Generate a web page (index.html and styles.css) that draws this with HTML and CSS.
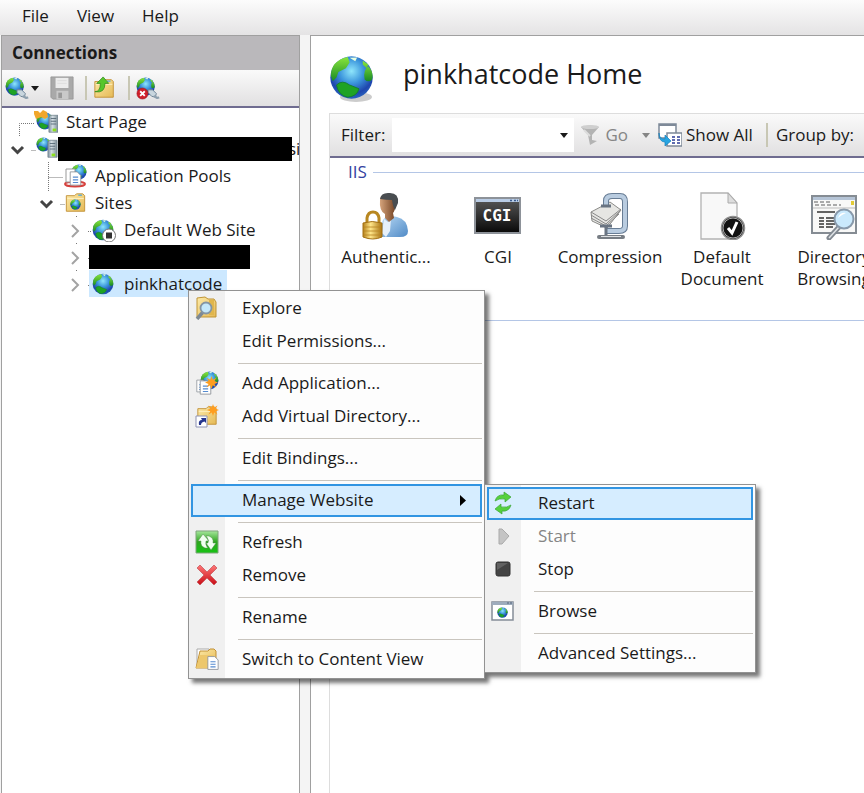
FILE: index.html
```html
<!DOCTYPE html>
<html lang="en">
<head>
<meta charset="utf-8">
<meta name="viewport" content="width=device-width, initial-scale=1">
<title>pinkhatcode Home</title>
<link rel="stylesheet" href="styles.css">
</head>
<body>
<svg class="defs" width="0" height="0" aria-hidden="true">
  <defs>
    <radialGradient id="sea" cx=".5" cy=".35" r=".7"><stop offset="0" stop-color="#8fe6fb"/><stop offset=".4" stop-color="#3d97dd"/><stop offset=".75" stop-color="#1f46ae"/><stop offset="1" stop-color="#2e6fc4"/></radialGradient>
    <linearGradient id="land" x1="0" y1="0" x2="0" y2="1"><stop offset="0" stop-color="#8ae63c"/><stop offset="1" stop-color="#188a25"/></linearGradient>
    <linearGradient id="folderFill" x1="0" y1="0" x2="1" y2="1"><stop offset="0" stop-color="#fdeaa8"/><stop offset="1" stop-color="#e5b955"/></linearGradient>
    <linearGradient id="metal" x1="0" y1="0" x2="1" y2="0"><stop offset="0" stop-color="#7f92a1"/><stop offset=".4" stop-color="#d3dde2"/><stop offset="1" stop-color="#7d8e98"/></linearGradient>
    <linearGradient id="green" x1="0" y1="0" x2="0" y2="1"><stop offset="0" stop-color="#a6e79c"/><stop offset=".5" stop-color="#2ea51f"/><stop offset="1" stop-color="#16c313"/></linearGradient>
    <linearGradient id="redFill" x1="0" y1="0" x2="0" y2="1"><stop offset="0" stop-color="#f77"/><stop offset="1" stop-color="#c80d16"/></linearGradient>
    <linearGradient id="dark" x1="0" y1="0" x2="0" y2="1"><stop offset="0" stop-color="#5a5a5a"/><stop offset="1" stop-color="#080808"/></linearGradient>
    <linearGradient id="gold" x1="0" y1="0" x2="1" y2="0"><stop offset="0" stop-color="#b5811a"/><stop offset=".4" stop-color="#ffe68a"/><stop offset="1" stop-color="#a87312"/></linearGradient>
    <linearGradient id="shirt" x1="0" y1="0" x2="1" y2="1"><stop offset="0" stop-color="#b7d8f4"/><stop offset="1" stop-color="#4f8ac6"/></linearGradient>
    <linearGradient id="skin" x1="0" y1="0" x2="1" y2="0"><stop offset="0" stop-color="#d6a47c"/><stop offset="1" stop-color="#6f3f20"/></linearGradient>
    <symbol id="globe" viewBox="0 0 24 24">
      <circle cx="12" cy="12" r="11.3" fill="url(#sea)"/>
      <path d="M1 11Q1 3 10 1l1 3-2 3-4 2-1 3-2 2Z" fill="url(#land)"/>
      <path d="M4 16q3-3 7 0l5 2q-1 4-6 4.500-5-1-6-6.500Z" fill="#1fa324" stroke="#147f2c" stroke-width=".5"/>
      <path d="M21 6q-3 2-2 7 2 2 4 0 1-4-2-7ZM18 3l3 2-1 2-2-2Z" fill="url(#land)"/>
      <path d="M11 1.500l4-.2-1 2Z" fill="#e9ffe0"/>
    </symbol>
    <symbol id="server" viewBox="0 0 12 20">
      <path d="M1 2l2-1.500h8V19H1Z" fill="url(#metal)" stroke="#6f7f8b" stroke-width=".8"/>
      <path d="M3 4h6M3 7h6M3 10h6" stroke="#596b78" stroke-width="1"/>
      <path d="M5 15h4v3H5Z" fill="#8be01c"/>
    </symbol>
    <symbol id="folder" viewBox="0 0 24 24">
      <path d="M2 4h9l2-2h7l2 2v17H2Z" fill="url(#folderFill)" stroke="#c29136" stroke-width="1"/>
      <path d="M3 7h18" stroke="#fff2c4"/>
      <path d="M15 3.500h4" stroke="#5badd8" stroke-width="1.500"/>
    </symbol>
    <symbol id="plug" viewBox="0 0 26 26">
      <use href="#globe" x="0" y="1" width="21" height="21"/>
      <path d="M13 15l5 0 4 4-1 4-4-1-4-4Z" fill="#c9d6de" stroke="#687f91"/>
      <path d="M20 21q2 4 5 2" fill="none" stroke="#8ea0ae" stroke-width="2.500"/>
    </symbol>
    <symbol id="star" viewBox="0 0 12 12"><path d="M6 0l1.200 3.400L10.500 1.500 8.700 4.700 12 6 8.700 7.300l1.800 3.200-3.300-1.900L6 12 4.800 8.600 1.500 10.500 3.300 7.300 0 6l3.300-1.300L1.500 1.500l3.300 1.900Z" fill="#ff9d1e"/></symbol>
    <symbol id="doc" viewBox="0 0 14 17"><path d="M1 1h8l4 4v11H1Z" fill="#fff" stroke="#8d9299"/><path d="M4 7h6M4 10h6M4 13h6" stroke="#568bd0" stroke-width="1.300"/></symbol>
  </defs>
</svg>

<nav class="menubar" aria-label="Main menu">
  <button type="button">File</button>
  <button type="button">View</button>
  <button type="button">Help</button>
</nav>

<div class="workspace">
  <aside class="connections">
    <h2>Connections</h2>
    <div class="toolbar">
      <button type="button" class="split" aria-label="Connect">
        <svg class="icon" viewBox="0 0 26 26"><use href="#plug" width="26" height="26"/></svg>
        <svg class="caret" viewBox="0 0 8 5"><path d="M0 0h8L4 5Z"/></svg>
      </button>
      <button type="button" aria-label="Save" disabled>
        <svg class="icon" viewBox="0 0 26 26"><path d="M1 1h24v24H3l-2-2Z" fill="#a9a9a9" stroke="#999"/><path d="M6 2h14v11H6Z" fill="#ececec"/><path d="M7 16h13v9H7Z" fill="#c9c9c9"/><path d="M9 18h4v6H9Z" fill="#999"/><path d="M8 5h10M8 8h10" stroke="#dcdcdc"/></svg>
      </button>
      <span class="divider"></span>
      <button type="button" aria-label="Up">
        <svg class="icon" viewBox="0 0 26 26"><use href="#folder" x="0" y="2" width="24" height="24"/><path d="M2 17q6 0 6-9H4l7-7 6 7h-4q0 11-11 9Z" fill="#55c62c" stroke="#318a1b" stroke-width=".8"/></svg>
      </button>
      <span class="divider"></span>
      <button type="button" aria-label="Delete connection">
        <svg class="icon" viewBox="0 0 26 26"><use href="#plug" width="26" height="26"/><circle cx="7" cy="19" r="6" fill="#cf1f2a" stroke="#9c1620" stroke-width=".6"/><path d="M4.500 16.500l5 5m0-5l-5 5" stroke="#fff" stroke-width="2"/></svg>
      </button>
    </div>

    <ul class="tree">
      <li>
        <div class="row">
          <svg class="joint" viewBox="0 0 29 27"><path class="dots" d="M17.500 28V15.500H32"/></svg>
          <span class="node"><svg class="icon" viewBox="0 0 24 24"><use href="#globe" x="2" y="2" width="18" height="18"/><path d="M0 1h4l2 2 3-3 4 2 1 5-3 2-4-2-5 2-2-5Z" fill="#f1a72c"/><use href="#server" x="14" y="4" width="11" height="20"/></svg>Start Page</span>
        </div>
      </li>
      <li>
        <div class="row">
          <svg class="joint" viewBox="0 0 29 27"><path class="open" d="M10 12l5.500 5.500L21 12"/><path class="dots" d="M29.500 15.500H34"/></svg>
          <span class="node machine"><svg class="icon" viewBox="0 0 24 24"><use href="#globe" x="2" y="0" width="15" height="15"/><use href="#server" x="13" y="1" width="11" height="22"/></svg><span class="redacted wide"></span><span class="tail">si</span></span>
        </div>
        <ul>
          <li>
            <div class="row">
              <svg class="joint" viewBox="0 0 29 27"><path class="dots" d="M17.500 0V29M17.500 15.500H32"/></svg>
              <span class="node"><svg class="icon" viewBox="0 0 24 24"><use href="#globe" x="8" y="0" width="16" height="16"/><ellipse cx="12" cy="20" rx="10" ry="2.500" fill="#fff" stroke="#d5413d" stroke-width="2"/><path d="M3 5h9v13H3Z" fill="#fff" stroke="#999"/><use href="#doc" x="6" y="7" width="13" height="15"/></svg>Application Pools</span>
            </div>
          </li>
          <li>
            <div class="row">
              <svg class="joint" viewBox="0 0 29 27"><path class="open" d="M10 12l5.500 5.500L21 12"/><path class="dots" d="M29.500 15.500H34"/></svg>
              <span class="node"><svg class="icon" viewBox="0 0 24 24"><use href="#folder" x="1" y="1" width="23" height="22"/><use href="#globe" x="7" y="8" width="11" height="11"/></svg>Sites</span>
            </div>
            <ul>
              <li>
                <div class="row">
                  <svg class="joint" viewBox="0 0 29 27"><path class="shut" d="M12 9l6 6-6 6"/><path class="dots" d="M16.500 0v2M28 15.500h4"/></svg>
                  <span class="node"><svg class="icon" viewBox="0 0 24 24"><use href="#globe" x="0" y="1" width="22" height="22"/><circle cx="17" cy="17.500" r="6.500" fill="#fff" stroke="#777"/><path d="M14 14.500h6v6h-6Z" fill="#333"/></svg>Default Web Site</span>
                </div>
              </li>
              <li>
                <div class="row">
                  <svg class="joint" viewBox="0 0 29 27"><path class="shut" d="M12 9l6 6-6 6"/><path class="dots" d="M16.500 0v2M28 15.500h4"/></svg>
                  <span class="redacted"></span>
                </div>
              </li>
              <li>
                <div class="row">
                  <svg class="joint" viewBox="0 0 29 27"><path class="shut" d="M12 9l6 6-6 6"/><path class="dots" d="M16.500 0v2M28 15.500h4"/></svg>
                  <span class="node selected"><svg class="icon" viewBox="0 0 24 24"><use href="#globe" x="0" y="1" width="22" height="22"/></svg>pinkhatcode</span>
                </div>
              </li>
            </ul>
          </li>
        </ul>
      </li>
    </ul>
  </aside>

  <main class="page">
    <header class="page-head">
      <svg class="big-globe" viewBox="0 0 46 48"><ellipse cx="27" cy="42" rx="16" ry="5" fill="#999" opacity=".5"/><use href="#globe" width="45" height="45"/></svg>
      <h1>pinkhatcode Home</h1>
    </header>

    <section class="list">
      <div class="filterbar">
        <label for="filter">Filter:</label>
        <span class="combo"><input id="filter" type="text"><button type="button" aria-label="Recent filters"><svg class="caret" viewBox="0 0 8 5"><path d="M0 0h8L4 5Z"/></svg></button></span>
        <button type="button" class="go" disabled>
          <svg class="icon" viewBox="0 0 24 24"><path d="M2 4q9-3 18 0l-7 8v5l5 1-7 4-2-10Z" fill="#b3b3b3"/><ellipse cx="11" cy="4" rx="9" ry="2" fill="#cfcfcf"/><path d="M5 7l6 6" stroke="#ddd" stroke-width="2"/></svg>Go
          <svg class="caret" viewBox="0 0 8 5"><path d="M0 0h8L4 5Z"/></svg>
        </button>
        <button type="button" class="show-all">
          <svg class="icon" viewBox="0 0 24 24"><path d="M1 1h17v14H1Z" fill="#fff" stroke="#7e8998" stroke-width="1.500"/><path d="M1 2h17" stroke="#7e8998" stroke-width="2"/><path d="M9 10h15v13H9Z" fill="#fff" stroke="#7e8998" stroke-width="1.500"/><path d="M14 14h3m2 0h3m-8 3h3m2 0h3m-8 3h3m2 0h3" stroke="#606cb0" stroke-width="2"/><path d="M1 10q0 6 6 6v-4l6 6-6 5v-4q-6 0-6-9Z" fill="#28a5e2" stroke="#1680bb" stroke-width=".7"/></svg>Show All
        </button>
        <span class="divider"></span>
        <span>Group by:</span>
      </div>

      <h2 class="group"><span>IIS</span></h2>
      <ul class="features">
        <li>
          <svg viewBox="0 0 48 48"><path d="M20 45V31q1-7 10-7l5 1q10 2 11 14 0 6-8 6Z" fill="url(#shirt)"/><path d="M22 27l4 3 3-3-1 12-4 6-4-4Z" fill="#e6f0fa"/><path d="M18 8q0-6 8-6 9 0 8 9-1 8-3 10l1 5-5 4-4-4v-4q-6-3-5-14Z" fill="url(#skin)"/><path d="M18 7q1-7 10-6 9 0 8 10l-3 7q-2-3-3-10-6 0-12-1Z" fill="#494d50"/><path d="M5 32v-6q1-6 6-6t6 6v6" fill="none" stroke="#b88720" stroke-width="3"/><path d="M1 31q9-3 19 0v14q-9 4-19 0Z" fill="url(#gold)" stroke="#a47115"/><path d="M2 35h17M2 39h17M2 43h17" stroke="#b88422" stroke-width=".8"/></svg>
          Authentic...
        </li>
        <li>
          <svg viewBox="0 0 48 48"><path d="M1 6h45v35H1Z" fill="url(#dark)" stroke="#8d9299" stroke-width="2"/><path d="M2 7h43v3H2Z" fill="#b9cce5"/><path d="M36 8.500h2m2 0h2m1 0h1" stroke="#3a5a8c" stroke-width="1.500"/><text x="23" y="29" class="cgi">CGI</text></svg>
          CGI
        </li>
        <li>
          <svg viewBox="0 0 48 48"><path d="M5 20l19-10 11 8-14 18L6 29Z" fill="#e6e6e3" stroke="#8b8b88"/><path d="M5 20l15 9 15-12M5 23l15 9 14-13M5 26l15 8 13-12" fill="none" stroke="#888"/><path d="M20 14V9q0-5 6-5h8q5 0 5 6v24q0 5-6 5H20" fill="none" stroke="#687d95" stroke-width="6"/><path d="M20 14V9q0-5 6-5h8q5 0 5 6v24q0 5-6 5H20" fill="none" stroke="#b9cce0" stroke-width="4"/><path d="M15 14h10M20 33v12M14 34h12" stroke="#697482" stroke-width="3"/><path d="M13 45h24" stroke="#777d84" stroke-width="4" stroke-linecap="round"/><path d="M15 44.500h20" stroke="#dcdfe2"/></svg>
          Compression
        </li>
        <li>
          <svg viewBox="0 0 48 48"><path d="M3 1h27l9 10v36H3Z" fill="#f8f8f8" stroke="#b2b2b2" stroke-width="1.300"/><path d="M30 1v10h9Z" fill="#ddd" stroke="#aaa"/><circle cx="35" cy="36" r="11.500" fill="#111" stroke="#909090" stroke-width="1.500"/><circle cx="35" cy="36" r="10" fill="none" stroke="#eee" stroke-width=".7"/><path d="M30 36l4 5 5-11" fill="none" stroke="#fff" stroke-width="3"/></svg>
          Default<br>Document
        </li>
        <li>
          <svg viewBox="0 0 48 48"><path d="M2 4h44v37H2Z" fill="#f8f8f7" stroke="#858c93" stroke-width="2"/><path d="M3 5h42v3H3Z" fill="#b5c4d6"/><path d="M4 10h17M5 13h26" stroke="#aaa" stroke-width="2" stroke-dasharray="4 2"/><path d="M41 9h3v4h-3Z" fill="#e2cb37"/><path d="M3 16h42" stroke="#bbb"/><path d="M7 20h18M9 26h5m2 0h9M9 29h5m2 0h9M9 32h5m2 0h9M9 35h5m2 0h7" stroke="#333" stroke-width="1.500"/><path d="M29 35L19 46" stroke="#828991" stroke-width="5" stroke-linecap="round"/><path d="M29 35L19 46" stroke="#dfe3e6" stroke-width="1.500"/><circle cx="34" cy="27" r="9.500" fill="#cae9fc" stroke="#8899aa" stroke-width="2"/><path d="M28 26q2-6 8-5-5 2-8 5Z" fill="#fff"/></svg>
          Directory<br>Browsing
        </li>
      </ul>
    </section>
  </main>
</div>

<ul class="menu context">
  <li><button type="button"><svg class="icon" viewBox="0 0 24 24"><path d="M2 2l8-1 3 2h6l2 3v15H2Z" fill="url(#folderFill)" stroke="#bf9537"/><path d="M14 4h5v15h-5Z" fill="#e0b64d"/><path d="M8 16l-6 7" stroke="#7e8993" stroke-width="3.500"/><circle cx="11" cy="12" r="5.500" fill="#c4e8fa" stroke="#8495a3" stroke-width="1.800"/></svg>Explore</button></li>
  <li><button type="button"><span class="icon"></span>Edit Permissions...</button></li>
  <li class="sep" role="separator"></li>
  <li><button type="button"><svg class="icon" viewBox="0 0 24 24"><use href="#globe" x="5" y="0" width="19" height="19"/><use href="#doc" x="1" y="8" width="11" height="14"/><use href="#doc" x="4" y="9" width="13" height="15"/><use href="#star" x="10" y="5" width="13" height="13"/></svg>Add Application...</button></li>
  <li><button type="button"><svg class="icon" viewBox="0 0 24 24"><use href="#folder" x="1" y="1" width="22" height="22"/><path d="M1 12h11v11H1Z" fill="#fff" stroke="#8e93b5"/><path d="M4 21q-1-5 3-5l-1-2h5v5l-1.500-1.500Q6 18 6 21Z" fill="#26368f"/><use href="#star" x="12" y="0" width="12" height="12"/></svg>Add Virtual Directory...</button></li>
  <li class="sep" role="separator"></li>
  <li><button type="button"><span class="icon"></span>Edit Bindings...</button></li>
  <li class="sep" role="separator"></li>
  <li class="parent">
    <button type="button" class="active" aria-haspopup="true" aria-expanded="true"><span class="icon"></span>Manage Website<svg class="arrow" viewBox="0 0 6 11"><path d="M0 0l6 5.500L0 11Z"/></svg></button>
    <ul class="menu submenu">
      <li><button type="button" class="active"><svg class="icon" viewBox="0 0 24 24"><path d="M4 10Q6 3 13 4V1l7 5-6 5V8q-6-1-10 2ZM20 14q-2 7-9 6v3l-7-5 6-5v3q6 1 10-2Z" fill="#55d13d" stroke="#3ba333" stroke-width=".7"/></svg>Restart</button></li>
      <li><button type="button" disabled><svg class="icon" viewBox="0 0 24 24"><path d="M8 5h3l7 7-7 8H8Z" fill="#c4c4c4" stroke="#aaa"/></svg>Start</button></li>
      <li><button type="button"><svg class="icon" viewBox="0 0 24 24"><rect x="5" y="5" width="14" height="14" rx="2" fill="#444" stroke="#333"/><path d="M6 13V6h11Z" fill="#626262"/></svg>Stop</button></li>
      <li class="sep" role="separator"></li>
      <li><button type="button"><svg class="icon" viewBox="0 0 24 24"><path d="M1 3h21v18H1Z" fill="#fff" stroke="#858d98" stroke-width="1.500"/><path d="M1 4.500h21" stroke="#9eacbc" stroke-width="3"/><path d="M16 4h2m1 0h2" stroke="#526178"/><use href="#globe" x="6" y="8" width="11" height="11"/></svg>Browse</button></li>
      <li class="sep" role="separator"></li>
      <li><button type="button"><span class="icon"></span>Advanced Settings...</button></li>
    </ul>
  </li>
  <li class="sep" role="separator"></li>
  <li><button type="button"><svg class="icon" viewBox="0 0 24 24"><path d="M1 1h22v22H1Z" fill="url(#green)" stroke="#7fa47b"/><path d="M8 4L3 11h3q-1 5 4 7h3q-3-3-2-7h3ZM16 20l5-7h-3q1-5-4-7h-3q3 3 2 7h-2Z" fill="#f1fff0" stroke="#538d4d" stroke-width=".5"/></svg>Refresh</button></li>
  <li><button type="button"><svg class="icon" viewBox="0 0 24 24"><path d="M2 5l3-3 7 7 7-7 3 3-7 7 7 7-3 3-7-7-7 7-3-3 7-7Z" fill="url(#redFill)" stroke="#c85960" stroke-width=".8"/></svg>Remove</button></li>
  <li class="sep" role="separator"></li>
  <li><button type="button"><span class="icon"></span>Rename</button></li>
  <li class="sep" role="separator"></li>
  <li><button type="button"><svg class="icon" viewBox="0 0 24 24"><path d="M2 2h12v16H2Z" fill="#fff" stroke="#aaa"/><path d="M5 4h8l2-2h4l2 2v17H1Z" fill="url(#folderFill)" stroke="#c29136"/><path d="M1 21L5 8h14l-4 13Z" fill="#edc76c"/><use href="#doc" x="12" y="8" width="12" height="16"/></svg>Switch to Content View</button></li>
</ul>
</body>
</html>
```
FILE: styles.css
```css
* {
  box-sizing: border-box;
}

body {
  margin: 0;
  min-height: 100vh;
  display: flex;
  flex-direction: column;
  overflow: hidden;
  background: #f4f4f4;
  color: #1a1a1a;
  font: 17px/22px "Open Sans", "Noto Sans", sans-serif;
}

button,
input {
  font: inherit;
  color: inherit;
}

button {
  display: flex;
  align-items: center;
  padding: 0;
  border: 0;
  background: none;
  white-space: nowrap;
}

button:disabled {
  color: #858585;
}

ul {
  margin: 0;
  padding: 0;
  list-style: none;
}

h1,
h2 {
  margin: 0;
}

.defs {
  position: absolute;
}

.icon {
  flex: none;
  width: 24px;
  height: 24px;
}

.caret {
  flex: none;
  width: 8px;
  height: 5px;
  fill: currentColor;
}

.divider {
  width: 2px;
  height: 24px;
  background: #c8c7b4;
}

.menubar {
  display: flex;
  gap: 28px;
  height: 35px;
  padding: 0 22px 4px;
  background: linear-gradient(#fcfcfc, #e4e3e4);
}

.workspace {
  flex: 1;
  display: flex;
  gap: 10px;
  padding-left: 1px;
}

/* Connections pane */
.connections {
  flex: 0 0 299px;
  overflow: hidden;
  border: solid #a0a0a0;
  border-width: 1px 1px 0;
  background: #fff;
}

.connections h2 {
  padding: 6px 10px;
  background: #bab8bb;
  font-size: 17px;
  line-height: 22px;
}

.toolbar {
  display: flex;
  align-items: center;
  gap: 6px;
  height: 38px;
  padding: 0 3px;
  border-bottom: 2px solid #6f6c90;
  background: linear-gradient(#fafafa, #e1e0e1);
}

.toolbar .divider {
  margin-left: 5px;
}

.split {
  gap: 2px;
  margin-right: 5px;
}

.tree ul {
  padding-left: 29px;
}

.row {
  display: flex;
  align-items: center;
  height: 27px;
}

.joint {
  flex: none;
  width: 29px;
  height: 27px;
  overflow: visible;
  fill: none;
}

.dots {
  stroke: #777;
  stroke-dasharray: 1 1;
}

.open {
  stroke: #444;
  stroke-width: 3;
}

.shut {
  stroke: #a3a3a3;
  stroke-width: 2;
}

.node {
  display: flex;
  align-items: center;
  gap: 8px;
  height: 27px;
  padding: 0 5px 0 3px;
  white-space: nowrap;
}

.selected {
  background: #cce8ff;
}

.machine {
  gap: 0;
}

.redacted {
  flex: none;
  width: 161px;
  height: 24px;
  background: #000;
}

.wide {
  width: 234px;
  z-index: 1;
}

.tail {
  margin-left: -4px;
}

/* Feature page */
.page {
  flex: 1;
  min-width: 0;
  display: flex;
  flex-direction: column;
  overflow: hidden;
  padding-left: 18px;
  border-top: 1px solid #a0a0a0;
  border-left: 1px solid #a0a0a0;
  background: #fff;
}

.page-head {
  display: flex;
  gap: 28px;
  padding: 19px 0 10px;
}

.page-head h1 {
  padding-top: 3px;
  font-size: 27px;
  line-height: 32px;
  font-weight: 400;
  white-space: nowrap;
}

.big-globe {
  width: 46px;
  height: 48px;
}

.list {
  flex: 1;
  border-top: 1px solid #ddd;
  border-left: 1px solid #ddd;
}

.filterbar {
  display: flex;
  align-items: center;
  height: 44px;
  padding-left: 11px;
  border-bottom: 2px solid #6f6c90;
  background: linear-gradient(#fafafa, #e1e0e1);
  white-space: nowrap;
}

.combo {
  display: flex;
  width: 182px;
  height: 34px;
  margin: 0 5px 0 7px;
  background: #fff;
}

.combo input {
  flex: 1;
  min-width: 0;
  border: 0;
  background: none;
}

.combo button {
  justify-content: center;
  width: 20px;
}

.go .icon {
  margin-right: 2px;
}

.go .caret {
  margin: 0 8px 0 14px;
}

.show-all .icon {
  margin-right: 4px;
}

.filterbar .divider {
  margin: 0 8px 0 13px;
}

.group {
  display: flex;
  align-items: center;
  gap: 6px;
  padding: 3px 0 0 18px;
  color: #3442a0;
  font-size: 17px;
  line-height: 22px;
  font-weight: 400;
}

.group::after {
  content: "";
  flex: 1;
  height: 1px;
  background: #b4c6e6;
}

.features {
  display: flex;
  height: 138px;
  padding-top: 9px;
  border-bottom: 1px solid #b4c6e6;
}

.features li {
  flex: 0 0 112px;
  text-align: center;
  white-space: nowrap;
}

.features svg {
  display: block;
  width: 48px;
  height: 48px;
  margin: 0 auto 6px;
}

.cgi {
  fill: #fff;
  font: bold 16px "DejaVu Sans Mono", monospace;
  text-anchor: middle;
}

/* Popup menus */
.menu {
  position: absolute;
  padding: 1px 2px 2px;
  border: 1px solid #929292;
  background: linear-gradient(90deg, #f0f0f0 36px, #fdfdfd 36px);
  box-shadow: 4px 4px 4px #0008;
}

.context {
  top: 290px;
  left: 188px;
  width: 297px;
}

.submenu {
  top: 0;
  left: 293px;
  width: 272px;
  padding: 2px;
}

.parent {
  position: relative;
}

.menu button {
  width: 100%;
  height: 33px;
  padding: 0 0 1px 3px;
  border: 1px solid transparent;
}

.menu .icon {
  margin-right: 23px;
}

.menu .active {
  border: 2px solid #3295e2;
  padding-left: 2px;
  background: #d6edff;
}

.arrow {
  width: 6px;
  height: 11px;
  margin: 0 14px 0 auto;
}

.sep {
  height: 9px;
  margin-left: 47px;
  padding-top: 5px;
}

.sep::before {
  content: "";
  display: block;
  height: 1px;
  background: #c9c5be;
}
```
